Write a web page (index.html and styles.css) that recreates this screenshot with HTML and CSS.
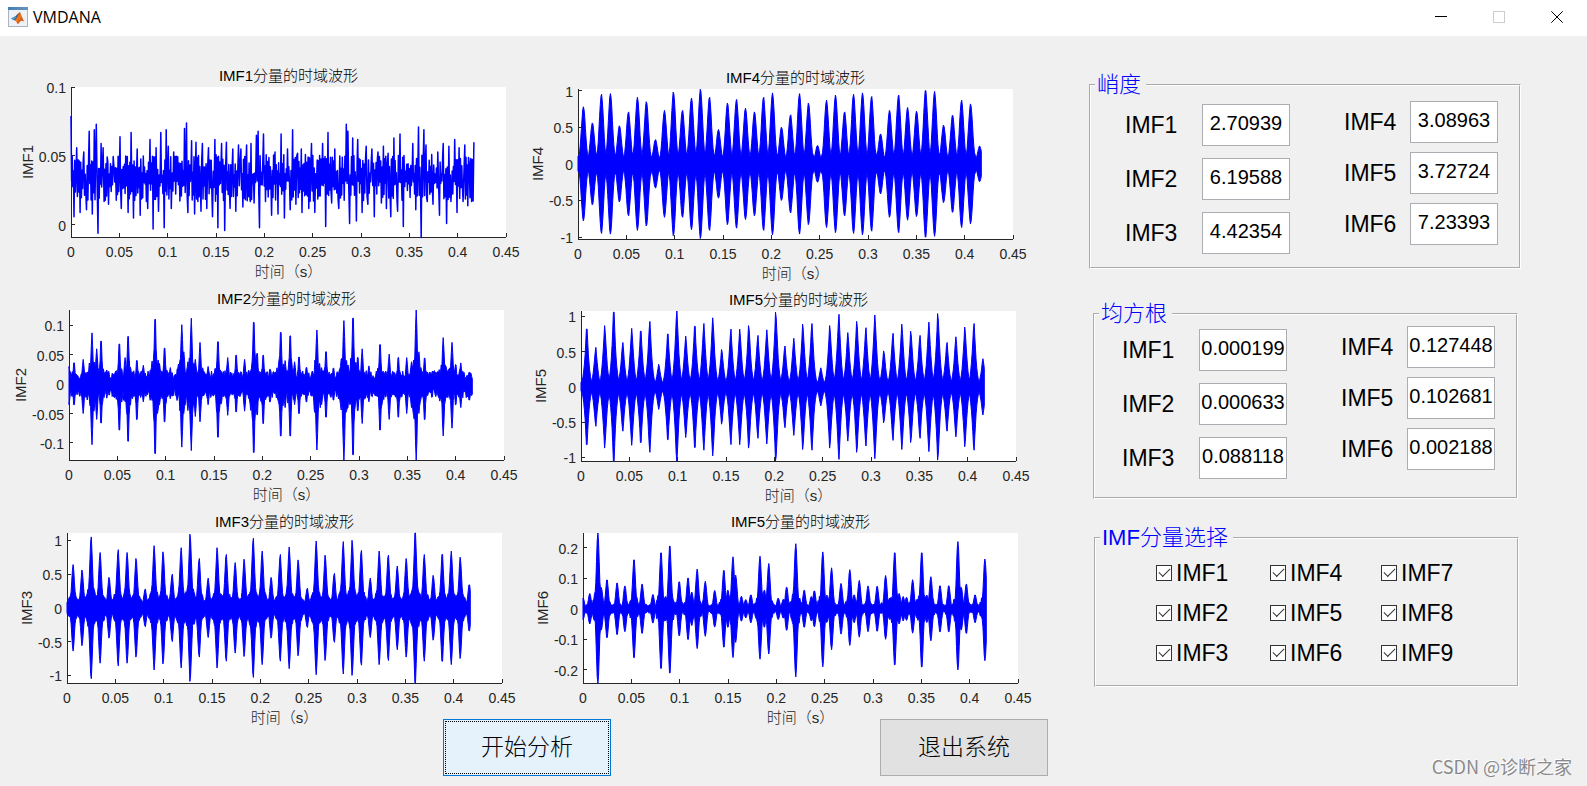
FILE: index.html
```html
<!DOCTYPE html>
<html lang="zh-CN">
<head>
<meta charset="utf-8">
<title>VMDANA</title>
<link rel="stylesheet" href="styles.css">
</head>
<body>
<header class="titlebar">
  <svg class="app-icon" viewBox="0 0 20 20" aria-hidden="true">
    <defs>
      <linearGradient id="bar" x1="0" x2="1" y1="0" y2="0"><stop offset="0" stop-color="#3f7fb5"/><stop offset="1" stop-color="#6c93bd"/></linearGradient>
      <linearGradient id="peak" x1="0" x2="1" y1="0" y2="1"><stop offset="0" stop-color="#7c2410"/><stop offset=".45" stop-color="#f07a1c"/><stop offset="1" stop-color="#b02a12"/></linearGradient>
    </defs>
    <rect x=".5" y=".5" width="19" height="19" fill="#eef1f5" stroke="#a9b4c2"/>
    <rect x="0" y="0" width="20" height="3" fill="url(#bar)"/>
    <path d="M3 11.5 L7.5 9.3 L10.5 6 L11 9 L8 13.5 L6 13.2Z" fill="#2a5f9e"/>
    <path d="M3 11.5 L6 12.8 L8 10.5 L7.5 9.3Z" fill="#4f9fc4"/>
    <path d="M6.5 13.2 C8.8 12.5 9.5 6.5 11.8 5 C13.3 6.5 14.3 11.5 16.5 15 C14.8 13.3 13 13.3 11.8 15 C11 16.5 10 17 9.2 16.8 C8.8 15 7.8 13.6 6.5 13.2Z" fill="url(#peak)"/>
  </svg>
  <h1 class="app-name">VMDANA</h1>
  <div class="window-controls">
    <button type="button" class="window-button" aria-label="最小化"><svg viewBox="0 0 12 12"><path d="M0 5.5H12"/></svg></button>
    <button type="button" class="window-button" aria-label="最大化" disabled><svg viewBox="0 0 12 12"><path d="M.5 .5H11.5V11.5H.5Z"/></svg></button>
    <button type="button" class="window-button" aria-label="关闭"><svg class="smooth" viewBox="0 0 12 12"><path d="M.3 .3L11.7 11.7M11.7 .3L.3 11.7"/></svg></button>
  </div>
</header>

<main class="workspace">
  <section class="charts">
    <div class="plots">
      <div class="plot-column" id="plots-left"></div>
      <div class="plot-column plot-column-right" id="plots-right"></div>
    </div>
    <div class="actions">
      <button type="button" class="action action-primary">开始分析</button>
      <button type="button" class="action">退出系统</button>
    </div>
  </section>

  <section class="panels">
    <fieldset class="panel panel-kurtosis">
      <legend>峭度</legend>
      <div class="fields">
        <div class="field-column">
          <div class="field"><label for="k1">IMF1</label><input id="k1" type="text" value="2.70939"></div>
          <div class="field"><label for="k2">IMF2</label><input id="k2" type="text" value="6.19588"></div>
          <div class="field"><label for="k3">IMF3</label><input id="k3" type="text" value="4.42354"></div>
        </div>
        <div class="field-column field-column-right">
          <div class="field"><label for="k4">IMF4</label><input id="k4" type="text" value="3.08963"></div>
          <div class="field"><label for="k5">IMF5</label><input id="k5" type="text" value="3.72724"></div>
          <div class="field"><label for="k6">IMF6</label><input id="k6" type="text" value="7.23393"></div>
        </div>
      </div>
    </fieldset>

    <fieldset class="panel panel-rms">
      <legend>均方根</legend>
      <div class="fields">
        <div class="field-column">
          <div class="field"><label for="r1">IMF1</label><input id="r1" type="text" value="0.000199"></div>
          <div class="field"><label for="r2">IMF2</label><input id="r2" type="text" value="0.000633"></div>
          <div class="field"><label for="r3">IMF3</label><input id="r3" type="text" value="0.088118"></div>
        </div>
        <div class="field-column field-column-right">
          <div class="field"><label for="r4">IMF4</label><input id="r4" type="text" value="0.127448"></div>
          <div class="field"><label for="r5">IMF5</label><input id="r5" type="text" value="0.102681"></div>
          <div class="field"><label for="r6">IMF6</label><input id="r6" type="text" value="0.002188"></div>
        </div>
      </div>
    </fieldset>

    <fieldset class="panel panel-select">
      <legend>IMF分量选择</legend>
      <div class="checks">
        <label class="check"><input type="checkbox" checked>IMF1</label>
        <label class="check"><input type="checkbox" checked>IMF4</label>
        <label class="check"><input type="checkbox" checked>IMF7</label>
        <label class="check"><input type="checkbox" checked>IMF2</label>
        <label class="check"><input type="checkbox" checked>IMF5</label>
        <label class="check"><input type="checkbox" checked>IMF8</label>
        <label class="check"><input type="checkbox" checked>IMF3</label>
        <label class="check"><input type="checkbox" checked>IMF6</label>
        <label class="check"><input type="checkbox" checked>IMF9</label>
      </div>
    </fieldset>
  </section>
</main>
<p class="watermark">CSDN @诊断之家</p>
<script src="plots.js"></script>
</body>
</html>
```
FILE: styles.css
```css
* { box-sizing: border-box; }

body {
  margin: 0;
  min-height: 100vh;
  position: relative;
  background: #f0f0f0;
  color: #000;
  font-family: "Liberation Sans", "Noto Sans CJK SC", sans-serif;
}

/* Title bar */
.titlebar {
  display: flex;
  align-items: center;
  height: 36px;
  padding: 0 0 2px 8px;
  background: #fff;
}
.app-icon { width: 20px; height: 20px; }
.app-name {
  margin: 0 0 0 5px;
  font: 400 16px/20px "Open Sans", "Noto Sans", sans-serif;
}
.window-controls { display: flex; margin-left: auto; height: 100%; }
.window-button {
  display: flex;
  align-items: center;
  justify-content: center;
  width: 58px;
  padding: 0 2px 0 0;
  border: 0;
  background: none;
}
.window-button svg {
  width: 12px;
  height: 12px;
  fill: none;
  stroke: #000;
  shape-rendering: crispEdges;
}
.window-button .smooth { shape-rendering: auto; }
.window-button:disabled svg { stroke: #ccc; }

/* Main layout */
.workspace {
  display: grid;
  grid-template-columns: 1060fr 527fr;
  padding-top: 27px;
}
.plots { display: grid; grid-template-columns: 1fr 1fr; }
.plot-column { display: flex; flex-direction: column; gap: 13px; }
.plot-column-right { gap: 12px; padding-top: 2px; }

/* Plots */
.plot { display: block; width: 100%; height: auto; overflow: visible; }
.plot text { fill: #262626; }
.plot .title { fill: #000; font-size: 15px; }
.cjk { font-family: "Noto Sans CJK SC", sans-serif; font-weight: 300; }
.plot .tick { font-size: 14px; }
.plot .axis-label { font-size: 15px; font-weight: 300; }
.plot .canvas { fill: #fff; }
.plot .axis { fill: none; stroke: #262626; shape-rendering: crispEdges; }
.plot .envelope { fill: #00f; stroke: #00f; stroke-width: 1; }
.plot .line { fill: none; stroke: #00f; stroke-width: 1.5; stroke-linejoin: round; }
.middle { text-anchor: middle; }
.end { text-anchor: end; }

/* Buttons under the plots */
.actions {
  display: flex;
  justify-content: space-between;
  padding: 0 12px 10px 443px;
}
.action {
  width: 168px;
  height: 57px;
  padding: 0 0 5px;
  border: 1px solid #adadad;
  background: #e1e1e1;
  color: #000;
  font: 300 23px/30px "Noto Sans CJK SC", sans-serif;
}
.action-primary {
  border: 1px solid #0078d7;
  background: #e5f1fb;
  outline: 1px dotted #000;
  outline-offset: -3px;
}

/* Group panels */
.panels { display: flex; flex-direction: column; padding-top: 8px; }
.panel {
  min-width: 0;
  margin: 0 66px 0 29px;
  padding: 0;
  border: 2px groove #fff;
}
.panel legend {
  margin-left: 4px;
  padding: 0 5px 0 2px;
  color: #00f;
  font-size: 22px;
  font-weight: 300;
  line-height: 28px;
}
.panel-kurtosis { height: 198px; }
.panel-rms { height: 199px; margin: 31px 69px 0 33px; }
.panel-select { height: 163px; margin: 25px 68px 0 34px; }

.fields { display: flex; padding-left: 34px; }
.panel-rms .fields { margin-top: -5px; padding-left: 27px; }
.field-column { display: flex; flex-direction: column; gap: 12px; padding-top: 5px; }
.field-column-right { gap: 9px; padding-top: 2px; margin-left: 54px; }
.panel-rms .field-column { padding-top: 6px; }
.panel-rms .field-column-right { padding-top: 3px; }
.field { display: flex; align-items: center; }
.field label { width: 77px; font-size: 23px; line-height: 28px; }
.field-column-right label { width: 66px; }
.field input {
  width: 88px;
  height: 42px;
  padding: 0 0 3px;
  border: 1px solid #abadb3;
  background: #fff;
  color: #000;
  font: 20px "Liberation Sans", sans-serif;
  text-align: center;
}

.checks {
  display: grid;
  grid-template-columns: 114px 111px 1fr;
  row-gap: 12px;
  padding: 7px 0 0 60px;
}
.check {
  display: flex;
  align-items: center;
  gap: 4px;
  font-size: 23px;
  line-height: 28px;
}
.check input {
  appearance: none;
  display: grid;
  place-items: center;
  width: 16px;
  height: 16px;
  margin: 0;
  border: 1px solid #333;
  background: #fff;
}
.check input:checked::before {
  content: "";
  width: 10px;
  height: 5px;
  margin-bottom: 4px;
  border: solid #333;
  border-width: 0 0 1px 1px;
  transform: rotate(-45deg);
}

.watermark {
  position: absolute;
  right: 15px;
  bottom: 7px;
  margin: 0;
  color: #8a8a8a;
  font: 400 18px/26px "Noto Sans CJK SC", sans-serif;
  text-shadow: -1px -1px 0 #fff;
}
```
FILE: plots.js
```js
// Horizontal axis: 0 to 0.45 s, divided into 1288 units.
const SPAN = 1288;
const AREA = { top: 24, width: 435, height: 150 };
const PITCH = 26.66;

// Burst trains: one amplitude for each burst, evenly spaced.
const train = (first, amps) => amps.map((a, k) => [first + k * PITCH, a, a]);

const imf3 = train(18, [.64,.56,1.05,.82,.45,.86,.82,.73,.28,.92,.83,.50,.89,1.09,.73,.44,.89,.79,.67,.72,1.03,.84,.45,.79,.90,.71,.29,.99,.78,.51,.98,1,.85,.44,.84,.78,.62,.73,1.11,.79,.48,.79,.84,.75,.34]);
const imf4 = train(16, [.78,.56,.95,.96,.52,.71,.91,.85,.33,.73,.98,.73,.90,1.02,.91,.47,.83,.88,.76,.71,.91,.97,.5,.67,.96,.83,.25,.87,.94,.71,.95,.97,.92,.41,.73,.94,.77,.72,1,.99,.53,.66,.87,.82,.24]);
const imf5 = train(17, [.82,.56,.87,1.06,.63,.83,.79,.93,.32,.75,1.08,.72,.86,.90,.98,.53,.82,.82,.87,.73,.81,1.06,.58,.69,.89,.90,.27,.87,1.03,.77,.93,.84,1.02,.51,.76,.89,.79,.73,.92,1.04,.63,.71,.85,.90,.40]);

// [position, positive peak, negative peak]
const imf2 = [[0,.03,.035],[15,.036,.035],[42,.042,.05],[68,.087,.103],[82,.06,.06],[95,.073,.066],[112,.024,.024],[149,.068,.078],[166,.045,.03],[175,.081,.097],[201,.04,.06],[220,.032,.03],[255,.11,.118],[268,.035,.035],[283,.061,.064],[300,.028,.025],[334,.101,.107],[340,.055,.05],[352,.038,.045],[362,.112,.113],[374,.042,.055],[388,.071,.064],[412,.03,.035],[441,.072,.09],[470,.045,.053],[495,.049,.047],[520,.042,.046],[547,.105,.116],[557,.052,.052],[575,.049,.067],[595,.025,.03],[627,.088,.088],[640,.04,.04],[655,.082,.088],[668,.038,.035],[681,.046,.05],[703,.028,.03],[734,.092,.112],[748,.028,.035],[761,.055,.056],[783,.027,.027],[814,.108,.13],[821,.04,.045],[841,.112,.12],[855,.045,.045],[868,.06,.067],[888,.031,.03],[921,.067,.078],[948,.051,.06],[975,.045,.056],[1000,.045,.05],[1014,.038,.04],[1028,.126,.13],[1036,.055,.05],[1053,.044,.06],[1108,.079,.088],[1134,.071,.075],[1145,.033,.035],[1160,.036,.04],[1185,.02,.027]];
const imf6 = [[0,.035],[20,.05],[44,.25],[54,.07],[71,.094],[101,.084],[124,.075],[151,.16],[175,.08],[207,.046],[231,.183,.195],[244,.04],[257,.205,.21],[285,.088],[311,.1],[322,.055],[338,.13],[362,.09],[390,.06],[417,.125],[429,.06],[444,.17,.16],[452,.11],[469,.04],[482,.03],[497,.045],[524,.172,.165],[537,.06],[550,.148],[578,.035],[593,.03],[603,.07],[630,.213,.223],[655,.06],[676,.04],[685,.058],[710,.186,.19],[722,.045],[736,.134],[764,.083],[790,.128,.12],[803,.045],[818,.093],[844,.075],[871,.073],[896,.109,.1],[908,.035],[923,.183],[936,.05],[948,.04],[958,.038],[976,.095,.08],[989,.03],[1003,.183,.19],[1018,.045],[1030,.105],[1057,.075],[1083,.075],[1110,.22,.2],[1120,.07],[1135,.08],[1161,.045],[1190,.163,.17]].map(([x, p, n = p]) => [x, p, n]);

// Turning points of the first mode, in thousandths.
const highs = [[0,79],[17,56],[38,53],[54,68],[69,69],[75,73],[89,59],[95,56],[109,46],[127,43],[145,64],[162,50],[178,67],[196,55],[214,50],[234,62],[252,56],[266,67],[282,69],[288,57],[304,53],[320,45],[336,70],[342,74],[357,61],[370,60],[389,59],[407,56],[426,62],[446,59],[460,60],[479,55],[496,58],[503,55],[520,58],[533,59],[549,65],[554,68],[570,66],[586,49],[604,53],[622,66],[641,55],[656,69],[671,52],[682,55],[694,51],[712,59],[729,47],[745,59],[761,67],[781,55],[796,50],[815,73],[820,68],[834,63],[849,62],[874,57],[891,55],[909,53],[925,57],[939,52],[956,63],[974,66],[994,44],[1012,59],[1029,71],[1045,69],[1051,58],[1068,51],[1086,53],[1102,59],[1119,57],[1136,62],[1149,56],[1166,58],[1179,45],[1193,60]];
const lows = [[9,6],[27,9],[46,11],[63,8],[80,-6],[98,17],[111,15],[134,18],[149,12],[169,9],[185,5],[205,7],[227,12],[243,-3],[259,10],[276,-2],[297,12],[327,21],[346,9],[366,8],[385,10],[402,12],[419,6],[435,-2],[455,-4],[471,12],[488,10],[509,13],[531,17],[542,16],[558,-2],[576,17],[594,7],[613,8],[632,5],[649,11],[666,15],[684,9],[704,12],[722,9],[738,21],[754,-1],[772,16],[793,12],[809,18],[825,1],[845,3],[862,9],[879,15],[898,6],[919,16],[934,12],[947,6],[967,10],[984,-1],[1004,20],[1021,11],[1037,-9],[1055,17],[1072,15],[1091,7],[1112,1],[1127,26],[1143,9],[1161,17],[1175,14],[1186,17]];

const plots = [
  { column: 'left', left: 71, name: 'IMF1', title: 'IMF1', labelGap: 44, min: -.0087, max: .1, ticks: [0, .05, .1] },
  { column: 'left', left: 69, name: 'IMF2', title: 'IMF2', labelGap: 49, min: -.129, max: .126, ticks: [-.1, -.05, 0, .05, .1],
    peaks: imf2, base: .016, rough: .45, widths: [4, 17, .36], power: 1.8 },
  { column: 'left', left: 67, name: 'IMF3', title: 'IMF3', labelGap: 41, min: -1.113, max: 1.108, ticks: [-1, -.5, 0, .5, 1],
    peaks: imf3, base: .07, rough: .15, widths: [6, 19, .3], power: 1.7 },
  { column: 'right', left: 48, name: 'IMF4', title: 'IMF4', labelGap: 41, min: -1.027, max: 1.023, ticks: [-1, -.5, 0, .5, 1],
    peaks: imf4, base: .06, rough: .1, widths: [8.8, 19, .24], power: 1.9 },
  { column: 'right', left: 51, name: 'IMF5', title: 'IMF5', labelGap: 41, min: -1.053, max: 1.077, ticks: [-1, -.5, 0, .5, 1],
    peaks: imf5, base: .06, rough: .1, widths: [7.4, 18, .17], power: 1.35 },
  { column: 'right', left: 53, name: 'IMF6', title: 'IMF5', labelGap: 41, min: -.243, max: .248, ticks: [-.2, -.1, 0, .1, .2],
    peaks: imf6, base: .011, rough: .4, widths: [5.8, 15, .26], power: 2 }
];

let seed = 7;
function random() {
  seed = (seed * 16807) % 2147483647;
  return seed / 2147483647;
}

function envelopePath(plot, toX, toY) {
  const [narrow, wide, skirt] = plot.widths;
  const upper = [];
  const lower = [];
  for (let u = 0; u <= 1195; u += 2) {
    const noise = () => 1 + plot.rough * (random() - .5) * 2;
    const amp = [plot.base * noise(), plot.base * noise()];
    const ripple = [noise(), noise()];
    for (const [x, ...extent] of plot.peaks) {
      const d = Math.abs(u - x);
      if (d > 36) continue;
      const burst = d < 1.1 ? 1 : Math.exp(-Math.pow(d / narrow, plot.power));
      const tail = skirt * Math.exp(-Math.pow(d / wide, 2));
      extent.forEach((e, i) => { amp[i] = Math.max(amp[i], e * burst, e * tail * ripple[i]); });
    }
    upper.push(toX(u).toFixed(1) + ' ' + toY(Math.min(amp[0], plot.max)).toFixed(1));
    lower.unshift(toX(u).toFixed(1) + ' ' + toY(Math.max(-amp[1], plot.min)).toFixed(1));
  }
  return 'M' + upper.concat(lower).join('L') + 'Z';
}

function linePath(toX, toY) {
  const turns = highs.concat(lows).sort((a, b) => a[0] - b[0]);
  const points = [];
  turns.forEach(([x, v], i) => {
    points.push([x, v]);
    const next = turns[i + 1];
    if (!next) return;
    const steps = Math.floor((next[0] - x) / 1.8);
    for (let s = 1; s < steps; s++) {
      const side = s % 2 ? -1 : 1;
      const direction = v > 35 ? side : -side;
      points.push([x + (next[0] - x) * s / steps, 34 + direction * (2 + random() * 15)]);
    }
  });
  return 'M' + points.map(([x, v]) => toX(x).toFixed(1) + ' ' + toY(v / 1000).toFixed(1)).join('L');
}

function render(plot) {
  const { top, width, height } = AREA;
  const { left } = plot;
  const bottom = top + height;
  const toX = u => left + u / SPAN * width;
  const toY = v => top + (plot.max - v) / (plot.max - plot.min) * height;
  let axis = `M${left} ${top}V${bottom}H${left + width}`;
  let labels = '';
  for (let i = 0; i <= 9; i++) {
    const x = left + width * i / 9;
    axis += `M${x} ${bottom}v-4`;
    labels += `<text class="tick middle" x="${x}" y="${bottom + 20}">${i * 5 / 100}</text>`;
  }
  for (const v of plot.ticks) {
    axis += `M${left} ${toY(v)}h4`;
    labels += `<text class="tick end" x="${left - 5}" y="${Math.round(toY(v)) + 6}">${v}</text>`;
  }
  const wave = plot.peaks
    ? `<path class="envelope" d="${envelopePath(plot, toX, toY)}"/>`
    : `<path class="line" d="${linePath(toX, toY)}"/>`;
  const centre = left + width / 2;
  const middle = top + height / 2;
  return `<svg class="plot" viewBox="0 0 530 210" role="img" aria-label="${plot.name}">
    <rect class="canvas" x="${left}" y="${top}" width="${width}" height="${height}"/>
    <path class="axis" d="${axis}"/>${wave}${labels}
    <text class="title middle" x="${centre}" y="18">${plot.title}<tspan class="cjk">分量的时域波形</tspan></text>
    <text class="axis-label middle" x="${centre}" y="${bottom + 40}">时间（s）</text>
    <text class="axis-label middle" transform="translate(${left - plot.labelGap + 6} ${middle}) rotate(-90)">${plot.name}</text>
  </svg>`;
}

for (const plot of plots) {
  document.getElementById('plots-' + plot.column).insertAdjacentHTML('beforeend', render(plot));
}
```
